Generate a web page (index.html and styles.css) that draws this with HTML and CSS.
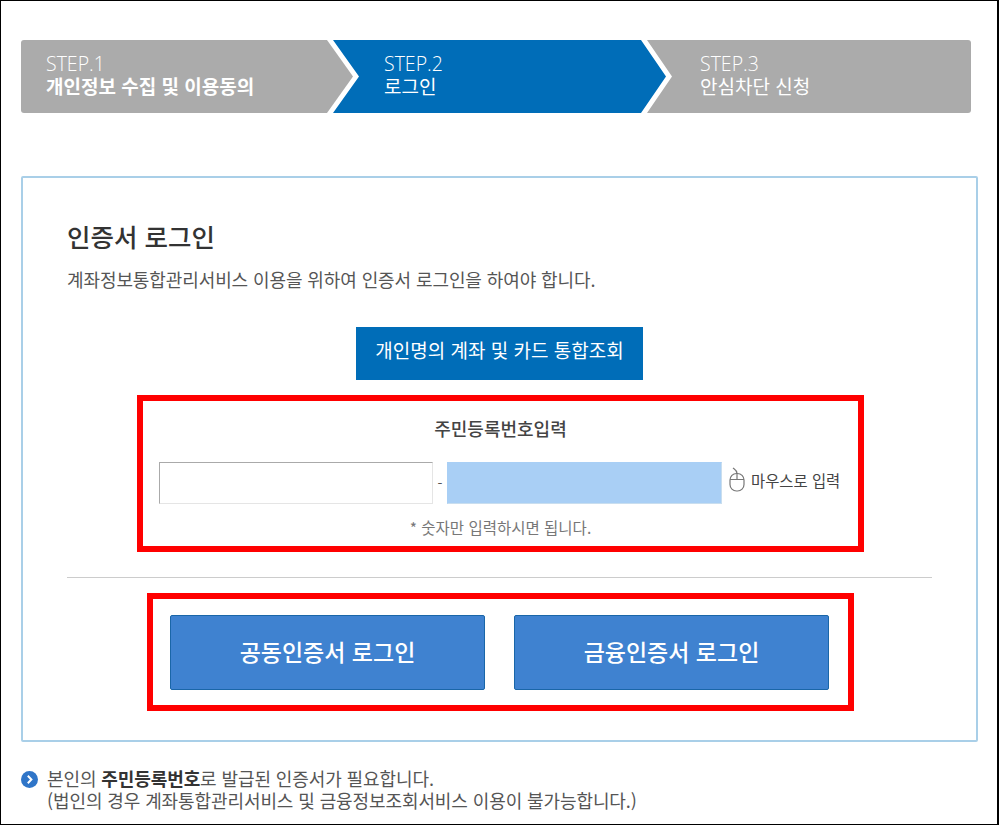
FILE: index.html
```html
<!DOCTYPE html>
<html lang="ko">
<head>
  <meta charset="UTF-8" />
  <title>인증서 로그인</title>
  <link rel="stylesheet" href="styles.css">
</head>
<body>
  <div class="steps">
    <div class="step step-first">
      <span class="step-no">STEP.1</span>
      <strong>개인정보 수집 및 이용동의</strong>
    </div>
    <div class="step step-mid active">
      <span class="step-no">STEP.2</span>
      <span>로그인</span>
    </div>
    <div class="step step-last">
      <span class="step-no">STEP.3</span>
      <span>안심차단 신청</span>
    </div>
  </div>

  <div class="card">
    <h2>인증서 로그인</h2>
    <p class="desc">계좌정보통합관리서비스 이용을 위하여 인증서 로그인을 하여야 합니다.</p>

    <div class="tab-wrap">
      <a href="#" class="tab">개인명의 계좌 및 카드 통합조회</a>
    </div>

    <div class="red-box id-box">
      <h3>주민등록번호입력</h3>
      <div class="id-row">
        <input type="text" class="id-input">
        <span class="dash">-</span>
        <input type="text" class="id-input id-secure">
        <svg class="mouse" width="18" height="26" viewBox="0 0 18 26" fill="none" stroke="#777" stroke-width="1.2">
          <rect x="2" y="6.5" width="14" height="17.5" rx="6.5"/>
          <path d="M2 12.5h14M9 6.5v6M9 6.5C9 3.5 7 2.5 5 1"/>
        </svg>
        <span class="mouse-label">마우스로 입력</span>
      </div>
      <p class="note">* 숫자만 입력하시면 됩니다.</p>
    </div>

    <hr class="line">

    <div class="red-box login-box">
      <button type="button" class="login-btn">공동인증서 로그인</button>
      <button type="button" class="login-btn">금융인증서 로그인</button>
    </div>
  </div>

  <div class="info">
    <svg class="info-icon" width="17" height="17" viewBox="0 0 17 17">
      <circle cx="8.5" cy="8.5" r="8.5" fill="#2f75c8"/>
      <path d="M6.8 4.8l3.6 3.7-3.6 3.7" fill="none" stroke="#fff" stroke-width="2"/>
    </svg>
    <p>본인의 <strong>주민등록번호</strong>로 발급된 인증서가 필요합니다.<br>(법인의 경우 계좌통합관리서비스 및 금융정보조회서비스 이용이 불가능합니다.)</p>
  </div>
</body>
</html>
```

FILE: styles.css
```css
* {
  box-sizing: border-box;
  margin: 0;
  padding: 0;
}

body {
  width: 999px;
  height: 825px;
  overflow: hidden;
  padding: 39px 0 0 20px;
  border: 1px solid #000;
  border-right-width: 2px;
  background: #fff;
  font-family: "Noto Sans CJK KR", "Noto Sans", sans-serif;
  color: #555;
}

.steps {
  display: flex;
  width: 950px;
  height: 73px;
  color: #fff;
  font-size: 19px;
  line-height: 23px;
}

.step {
  display: flex;
  flex-direction: column;
  justify-content: center;
  padding-bottom: 4px;
  background: #ababab;
}

.step strong {
  font-weight: 700;
}

.step-no {
  font-family: "Open Sans", sans-serif;
  font-size: 19.5px;
  line-height: 21px;
  font-weight: 300;
}

.step-first {
  width: 332px;
  padding-left: 25px;
  border-radius: 3px 0 0 3px;
  clip-path: polygon(0 0, 306px 0, 332px 50%, 306px 100%, 0 100%);
}

.step-mid {
  width: 333px;
  margin-left: -20px;
  padding-left: 51px;
  background: #006db8;
  clip-path: polygon(0 0, 308px 0, 333px 50%, 308px 100%, 0 100%, 26px 50%);
}

.step-last {
  width: 324px;
  margin-left: -19px;
  padding-left: 53px;
  border-radius: 0 3px 3px 0;
  clip-path: polygon(0 0, 100% 0, 100% 100%, 0 100%, 25px 50%);
}

.card {
  width: 957px;
  height: 566px;
  margin-top: 63px;
  padding: 40px 44px 0;
  border: 2px solid #a9cfe8;
  border-radius: 2px;
}

.card h2 {
  font-size: 25.5px;
  line-height: 36px;
  font-weight: 500;
  color: #333;
}

.desc {
  margin-top: 13px;
  font-size: 18px;
  line-height: 24px;
  letter-spacing: -0.1px;
}

.tab-wrap {
  display: flex;
  justify-content: center;
  margin-top: 36px;
}

.tab {
  width: 287px;
  height: 53px;
  background: #006db8;
  color: #fff;
  font-size: 19px;
  line-height: 46px;
  text-align: center;
  text-decoration: none;
}

.red-box {
  border: 6px solid #f00;
}

.id-box {
  width: 727px;
  height: 157px;
  margin: 15px 0 0 70px;
  padding: 15px 16px 0;
  text-align: center;
}

.id-box h3 {
  font-size: 18px;
  line-height: 24px;
  font-weight: 500;
  color: #444;
}

.id-row {
  display: flex;
  align-items: center;
  margin-top: 22px;
}

.id-input {
  width: 274px;
  height: 42px;
  border: 1px solid;
  border-color: #aaa #e5e5e5 #e5e5e5 #aaa;
  background: #fff;
}

.id-secure {
  width: 275px;
  background: #a9cff5;
  border-color: #a9cff5 #c9deef #c9deef #a9cff5;
}

.dash {
  width: 14px;
  font-size: 14px;
}

.mouse {
  margin: 0 0 7px 6px;
}

.mouse-label {
  margin: 0 0 6px 5px;
  font-size: 15.4px;
  color: #444;
  white-space: nowrap;
}

.note {
  margin-top: 13px;
  font-size: 15.5px;
  line-height: 20px;
  color: #777;
}

.line {
  margin-top: 25px;
  border: 0;
  border-top: 1px solid #ccc;
}

.login-box {
  display: flex;
  gap: 29px;
  width: 707px;
  height: 118px;
  margin: 15px 0 0 80px;
  padding: 16px 17px;
}

.login-btn {
  width: 315px;
  height: 75px;
  padding-bottom: 4px;
  background: #3f82d0;
  border: 1px solid #1a66a8;
  border-radius: 2px;
  color: #fff;
  font-family: inherit;
  font-size: 23px;
  font-weight: 500;
}

.info {
  display: flex;
  align-items: flex-start;
  gap: 9px;
  margin-top: 25px;
}

.info-icon {
  margin-top: 4px;
  flex: none;
}

.info p {
  font-size: 18px;
  line-height: 22px;
  letter-spacing: -0.1px;
}

.info strong {
  font-weight: 700;
  color: #333;
}
```
